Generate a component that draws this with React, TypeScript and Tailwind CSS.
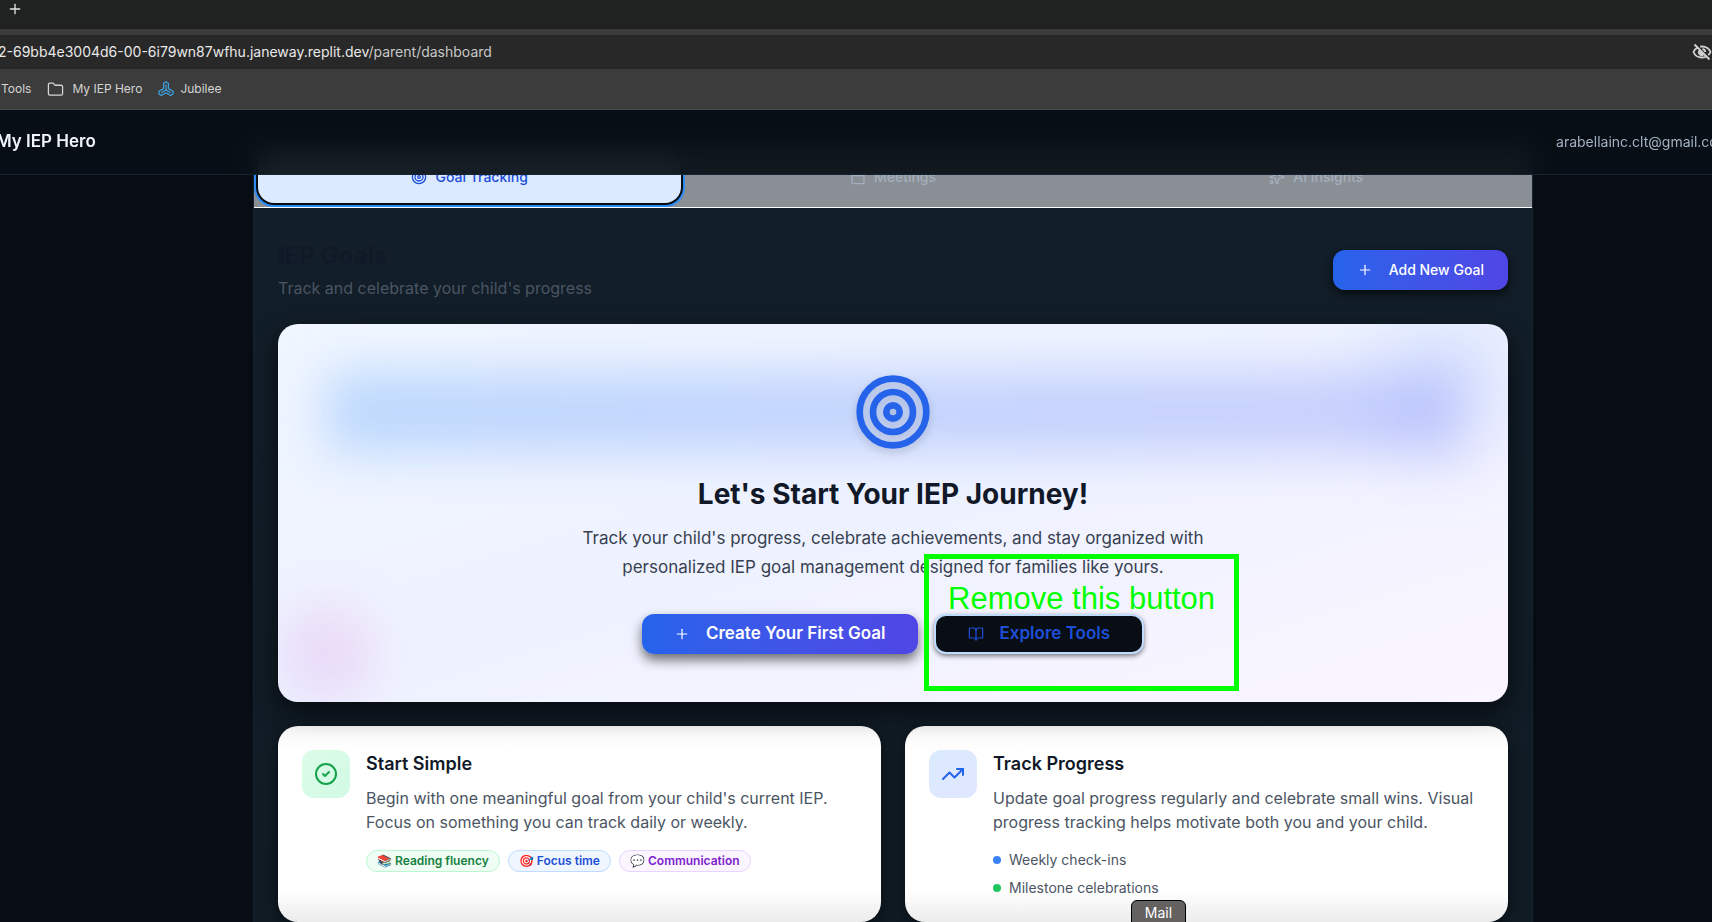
import { useState } from "react";
import { BookOpen, Calendar, CircleCheck, Folder, Plus, Sparkles, Target, TrendingUp } from "lucide-react";

const tabs = [
  { label: "Goal Tracking", Icon: Target },
  { label: "Meetings", Icon: Calendar },
  { label: "AI Insights", Icon: Sparkles },
];

function JubileeIcon() {
  return (
    <svg width="16" height="16" viewBox="0 0 16 16" fill="none" stroke="#3ea6e6" strokeWidth="1.2" strokeLinejoin="round" aria-hidden="true">
      {[0, 120, 240].map((angle) => (
        <g key={angle} transform={`rotate(${angle} 8 9)`}>
          <path d="M5.600 7.600V2.200L8 .800l2.400 1.400v5.400" />
          <path d="M8 9V3.600" />
        </g>
      ))}
    </svg>
  );
}

function HiddenEyeIcon() {
  return (
    <svg width="20" height="20" viewBox="0 0 20 20" fill="none" stroke="#d0d0d0" strokeWidth="1.900" aria-hidden="true">
      <path d="M5.700 5.500C3.500 6.600 2 8.500 1.500 10c1 3 4.500 5.500 8.500 5.500 1.300 0 2.500-.2 3.600-.7M8.200 4.700c.6-.1 1.200-.2 1.800-.2 4 0 7.500 2.500 8.500 5.500-.4 1.100-1.200 2.200-2.300 3.100" />
      <path d="M7 7.800a3.600 3.600 0 0 0 5.400 5z" fill="#d0d0d0" stroke="none" />
      <path d="M10.500 7a3.200 3.200 0 0 1 2.700 3" />
      <path d="M2.500 2.500l15 15" />
    </svg>
  );
}

function BrowserChrome() {
  return (
    <div className="bg-[#3c3c3c] text-[#e3e3e3]">
      <div className="flex h-[29px] items-start bg-[#202221] pl-[7px]">
        <button aria-label="New tab" className="mt-px flex size-4 items-center justify-center">
          <Plus size={16} strokeWidth={2} />
        </button>
      </div>
      <div className="mt-1.5 flex h-[34px] items-center justify-between overflow-hidden bg-[#282828]">
        <a href="/parent/dashboard" className="-ml-0.5 text-sm whitespace-nowrap text-[#c7c7c7]">
          <span className="text-[#e8e8e8]">2-69bb4e3004d6-00-6i79wn87wfhu.janeway.replit.dev</span>/parent/dashboard
        </a>
        <button aria-label="Tracking protection">
          <HiddenEyeIcon />
        </button>
      </div>
      <nav className="flex h-[41px] items-center gap-4 border-b border-[#4a4a4a] text-xs text-[#d4d4d4]">
        <a href="#tools" className="pl-px">Tools</a>
        <a href="#hero" className="flex items-center gap-2">
          <Folder size={17} strokeWidth={1.800} />
          My IEP Hero
        </a>
        <a href="#jubilee" className="flex items-center gap-1.5">
          <JubileeIcon />
          Jubilee
        </a>
      </nav>
    </div>
  );
}

function Hero() {
  return (
    <section className="relative rounded-[20px] bg-linear-to-br from-[#eff6ff] via-[#eef2ff] to-[#faf5ff] p-12 text-center shadow-[0_10px_24px_rgba(0,0,0,0.6)]">
      <div className="absolute inset-0 overflow-hidden rounded-[20px]">
        <div className="absolute top-0 right-0 size-32 rounded-full bg-linear-to-br from-[#60a5fa]/20 to-[#818cf8]/20 blur-2xl" />
        <div className="absolute bottom-0 left-0 size-24 rounded-full bg-linear-to-tr from-[#c084fc]/20 to-[#f472b6]/20 blur-xl" />
      </div>
      <div className="relative mb-6 flex justify-center">
        <div className="absolute inset-0 bg-linear-to-r from-[#60a5fa]/35 to-[#818cf8]/35 blur-xl" />
        <Target size={80} strokeWidth={2} className="relative text-[#2563eb] drop-shadow-lg" />
      </div>
      <h3 className="relative mb-3 text-[28px] leading-9 font-bold text-[#111827]">Let's Start Your IEP Journey!</h3>
      <p className="relative mx-auto mb-8 max-w-2xl text-[17px] leading-[29px] text-[#374151]">
        Track your child's progress, celebrate achievements, and stay organized with personalized IEP goal management designed for families like yours.
      </p>
      <div className="relative flex justify-center gap-4">
        <button className="flex h-10 items-center gap-4 rounded-xl bg-linear-to-r from-[#2563eb] to-[#4f46e5] px-8 text-[17px] font-semibold text-white shadow-[0_6px_12px_rgba(0,0,0,0.55)]">
          <Plus size={16} strokeWidth={1.800} />
          Create Your First Goal
        </button>
        <button className="flex h-10 items-center gap-4 rounded-xl border-2 border-[#bfdbfe] bg-[#090e15] px-8 text-[17px] font-semibold text-[#1d4ed8] shadow-[0_2px_5px_rgba(0,0,0,0.5)]">
          <BookOpen size={16} strokeWidth={1.800} />
          Explore Tools
        </button>
      </div>
    </section>
  );
}

const cardClass =
  "flex items-start gap-4 rounded-[20px] bg-[linear-gradient(to_bottom,#f8f8f9,#ffffff_28px,#ffffff_calc(100%-32px),#ececec)] p-6 shadow-[0_4px_14px_rgba(0,0,0,0.5)]";

function Tips() {
  return (
    <div className="grid grid-cols-2 gap-6">
      <article className={cardClass}>
        <div className="rounded-xl bg-linear-to-br from-[#dcfce7] to-[#d1fae5] p-3 text-[#16a34a]">
          <CircleCheck size={24} strokeWidth={2} />
        </div>
        <div>
          <h4 className="mb-2 text-lg leading-7 font-semibold text-[#111827]">Start Simple</h4>
          <p className="mb-4 leading-6 text-[#4b5563]">
            Begin with one meaningful goal from your child's current IEP. Focus on something you can track daily or weekly.
          </p>
          <ul className="flex gap-2 text-xs leading-4 font-semibold">
            <li className="rounded-full border border-[#bbf7d0] bg-[#f0fdf4] px-2.5 py-0.5 text-[#15803d]">📚 Reading fluency</li>
            <li className="rounded-full border border-[#bfdbfe] bg-[#eff6ff] px-2.5 py-0.5 text-[#1d4ed8]">🎯 Focus time</li>
            <li className="rounded-full border border-[#e9d5ff] bg-[#faf5ff] px-2.5 py-0.5 text-[#7e22ce]">💬 Communication</li>
          </ul>
        </div>
      </article>
      <article className={cardClass}>
        <div className="rounded-xl bg-linear-to-br from-[#dbeafe] to-[#e0e7ff] p-3 text-[#2563eb]">
          <TrendingUp size={24} strokeWidth={2} />
        </div>
        <div>
          <h4 className="mb-2 text-lg leading-7 font-semibold text-[#111827]">Track Progress</h4>
          <p className="mb-4 leading-6 text-[#4b5563]">
            Update goal progress regularly and celebrate small wins. Visual progress tracking helps motivate both you and your child.
          </p>
          <ul className="flex flex-col gap-2 text-sm leading-5 text-[#4b5563]">
            <li className="flex items-center gap-2">
              <span className="size-2 rounded-full bg-[#3b82f6]" />
              Weekly check-ins
            </li>
            <li className="flex items-center gap-2">
              <span className="size-2 rounded-full bg-[#22c55e]" />
              Milestone celebrations
            </li>
          </ul>
        </div>
      </article>
    </div>
  );
}

export default function App() {
  const [active, setActive] = useState(0);
  return (
    <div className="relative h-screen overflow-hidden bg-[#080d14] font-['Inter','Noto_Sans',sans-serif]">
      <BrowserChrome />
      <header className="relative z-10 flex h-[65px] items-center justify-between border-b border-[#142433] bg-[#070f16]/93 backdrop-blur-md">
        <span className="-ml-1 text-[17px] font-semibold text-[#f1f5f9]">My IEP Hero</span>
        <span className="-mr-[18px] text-sm text-[#a3b1c2]">arabellainc.clt@gmail.com</span>
      </header>

      <main className="-mt-7 pl-[74px]">
        <div className="mx-auto max-w-7xl border-x border-[#142433] bg-linear-to-b from-[#121e29] to-[#101b24]">
          <div role="tablist" className="grid grid-cols-3 border-b border-white bg-[#8a8e95] p-1">
            {tabs.map(({ label, Icon }, i) => (
              <button
                key={label}
                role="tab"
                aria-selected={i === active}
                onClick={() => setActive(i)}
                className={
                  i === active
                    ? "flex h-[52px] items-center justify-center gap-2 rounded-2xl bg-[#dbeafe] text-sm font-medium text-[#1d4ed8] ring-2 ring-[#2b8cf5] ring-offset-2 ring-offset-[#080d14]"
                    : "flex h-[52px] items-center justify-center gap-2 rounded-2xl text-sm font-medium text-[#a3afbe]"
                }
              >
                <Icon size={16} strokeWidth={2} />
                {label}
              </button>
            ))}
          </div>

          <div className="flex flex-col gap-6 p-6">
            <div className="flex items-center justify-between pt-2">
              <div>
                <h2 className="mb-1 text-2xl leading-8 font-bold text-[#111827]">IEP Goals</h2>
                <p className="leading-6 text-[#4b5563]">Track and celebrate your child's progress</p>
              </div>
              <button className="flex h-10 items-center gap-4 rounded-xl bg-linear-to-r from-[#2563eb] to-[#4f46e5] px-6 text-sm font-medium text-white shadow-[0_4px_10px_rgba(0,0,0,0.6)]">
                <Plus size={16} strokeWidth={1.800} />
                Add New Goal
              </button>
            </div>
            <Hero />
            <Tips />
          </div>
        </div>
      </main>

      <div className="absolute top-[554px] left-[924px] z-20 h-[137px] w-[315px] border-5 border-[#00ff00] pt-[22px] pl-[19px] font-['Liberation_Sans',sans-serif] text-[31px] leading-9 whitespace-nowrap text-[#00ff00]">
        Remove this button
      </div>
      <div className="absolute top-[900px] left-[1131px] z-20 h-8 w-[55px] rounded-md border border-black bg-[#636260] text-center text-sm leading-6 text-white">
        Mail
      </div>
    </div>
  );
}
